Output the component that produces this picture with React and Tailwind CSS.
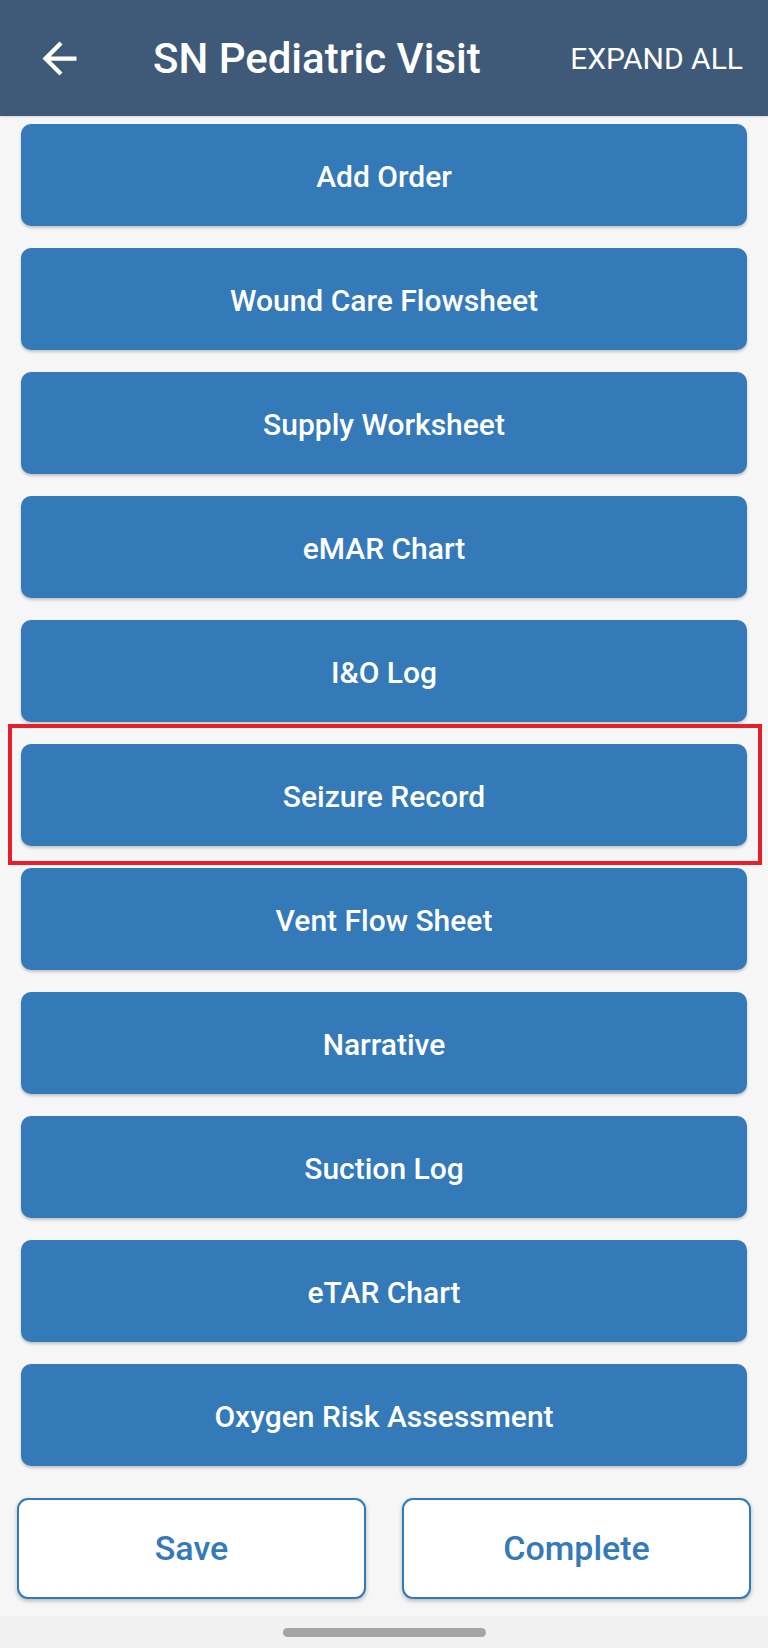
const items = [
  "Add Order",
  "Wound Care Flowsheet",
  "Supply Worksheet",
  "eMAR Chart",
  "I&O Log",
  "Seizure Record",
  "Vent Flow Sheet",
  "Narrative",
  "Suction Log",
  "eTAR Chart",
  "Oxygen Risk Assessment",
];

const BackArrow = () => (
  <svg viewBox="0 0 24 24" className="w-[51px] h-[51px]" fill="#ffffff">
    <path d="M20 11H7.83l5.59-5.59L12 4l-8 8 8 8 1.41-1.41L7.83 13H20v-2z" />
  </svg>
);

const App = () => {
  return (
    <div
      className="w-[768px] h-[1648px] bg-[#f6f6f6] flex flex-col overflow-hidden"
      style={{ fontFamily: "Roboto, 'Liberation Sans', sans-serif" }}
    >
      <header className="h-[116px] bg-[#3e5a78] flex items-center pl-[34px] pr-[25px] shadow-sm">
        <BackArrow />
        <h1 className="ml-[68px] text-white text-[42px] font-medium">
          SN Pediatric Visit
        </h1>
        <button className="ml-auto text-white text-[30px] font-normal">
          EXPAND ALL
        </button>
      </header>

      <div className="flex flex-col gap-[22px] px-[21px] pt-[8px]">
        {items.map((item) => (
          <div key={item} className="relative">
            <button className="w-full h-[102px] pt-[3px] rounded-[10px] bg-[#3479b8] text-white text-[30px] font-medium shadow-[0_2px_3px_rgba(0,0,0,0.2)]">
              {item}
            </button>
            {item === "Seizure Record" && (
              <div className="absolute -top-[20px] -bottom-[19px] -left-[13px] -right-[15px] border-4 border-[#e6202b] pointer-events-none" />
            )}
          </div>
        ))}
      </div>

      <div className="grid grid-cols-2 gap-[36px] px-[17px] mt-[32px]">
        <button className="h-[101px] rounded-[11px] bg-white border-2 border-[#3479b8] text-[#3479b8] text-[34px] font-medium shadow-[0_2px_4px_rgba(0,0,0,0.25)]">
          Save
        </button>
        <button className="h-[101px] rounded-[11px] bg-white border-2 border-[#3479b8] text-[#3479b8] text-[34px] font-medium shadow-[0_2px_4px_rgba(0,0,0,0.25)]">
          Complete
        </button>
      </div>

      <div className="mt-auto h-[32px] bg-[#f1f1f1] flex items-start justify-center pt-[12px]">
        <div className="w-[203px] h-[9px] rounded-full bg-[#a5a5a5]" />
      </div>
    </div>
  );
};

export default App;
